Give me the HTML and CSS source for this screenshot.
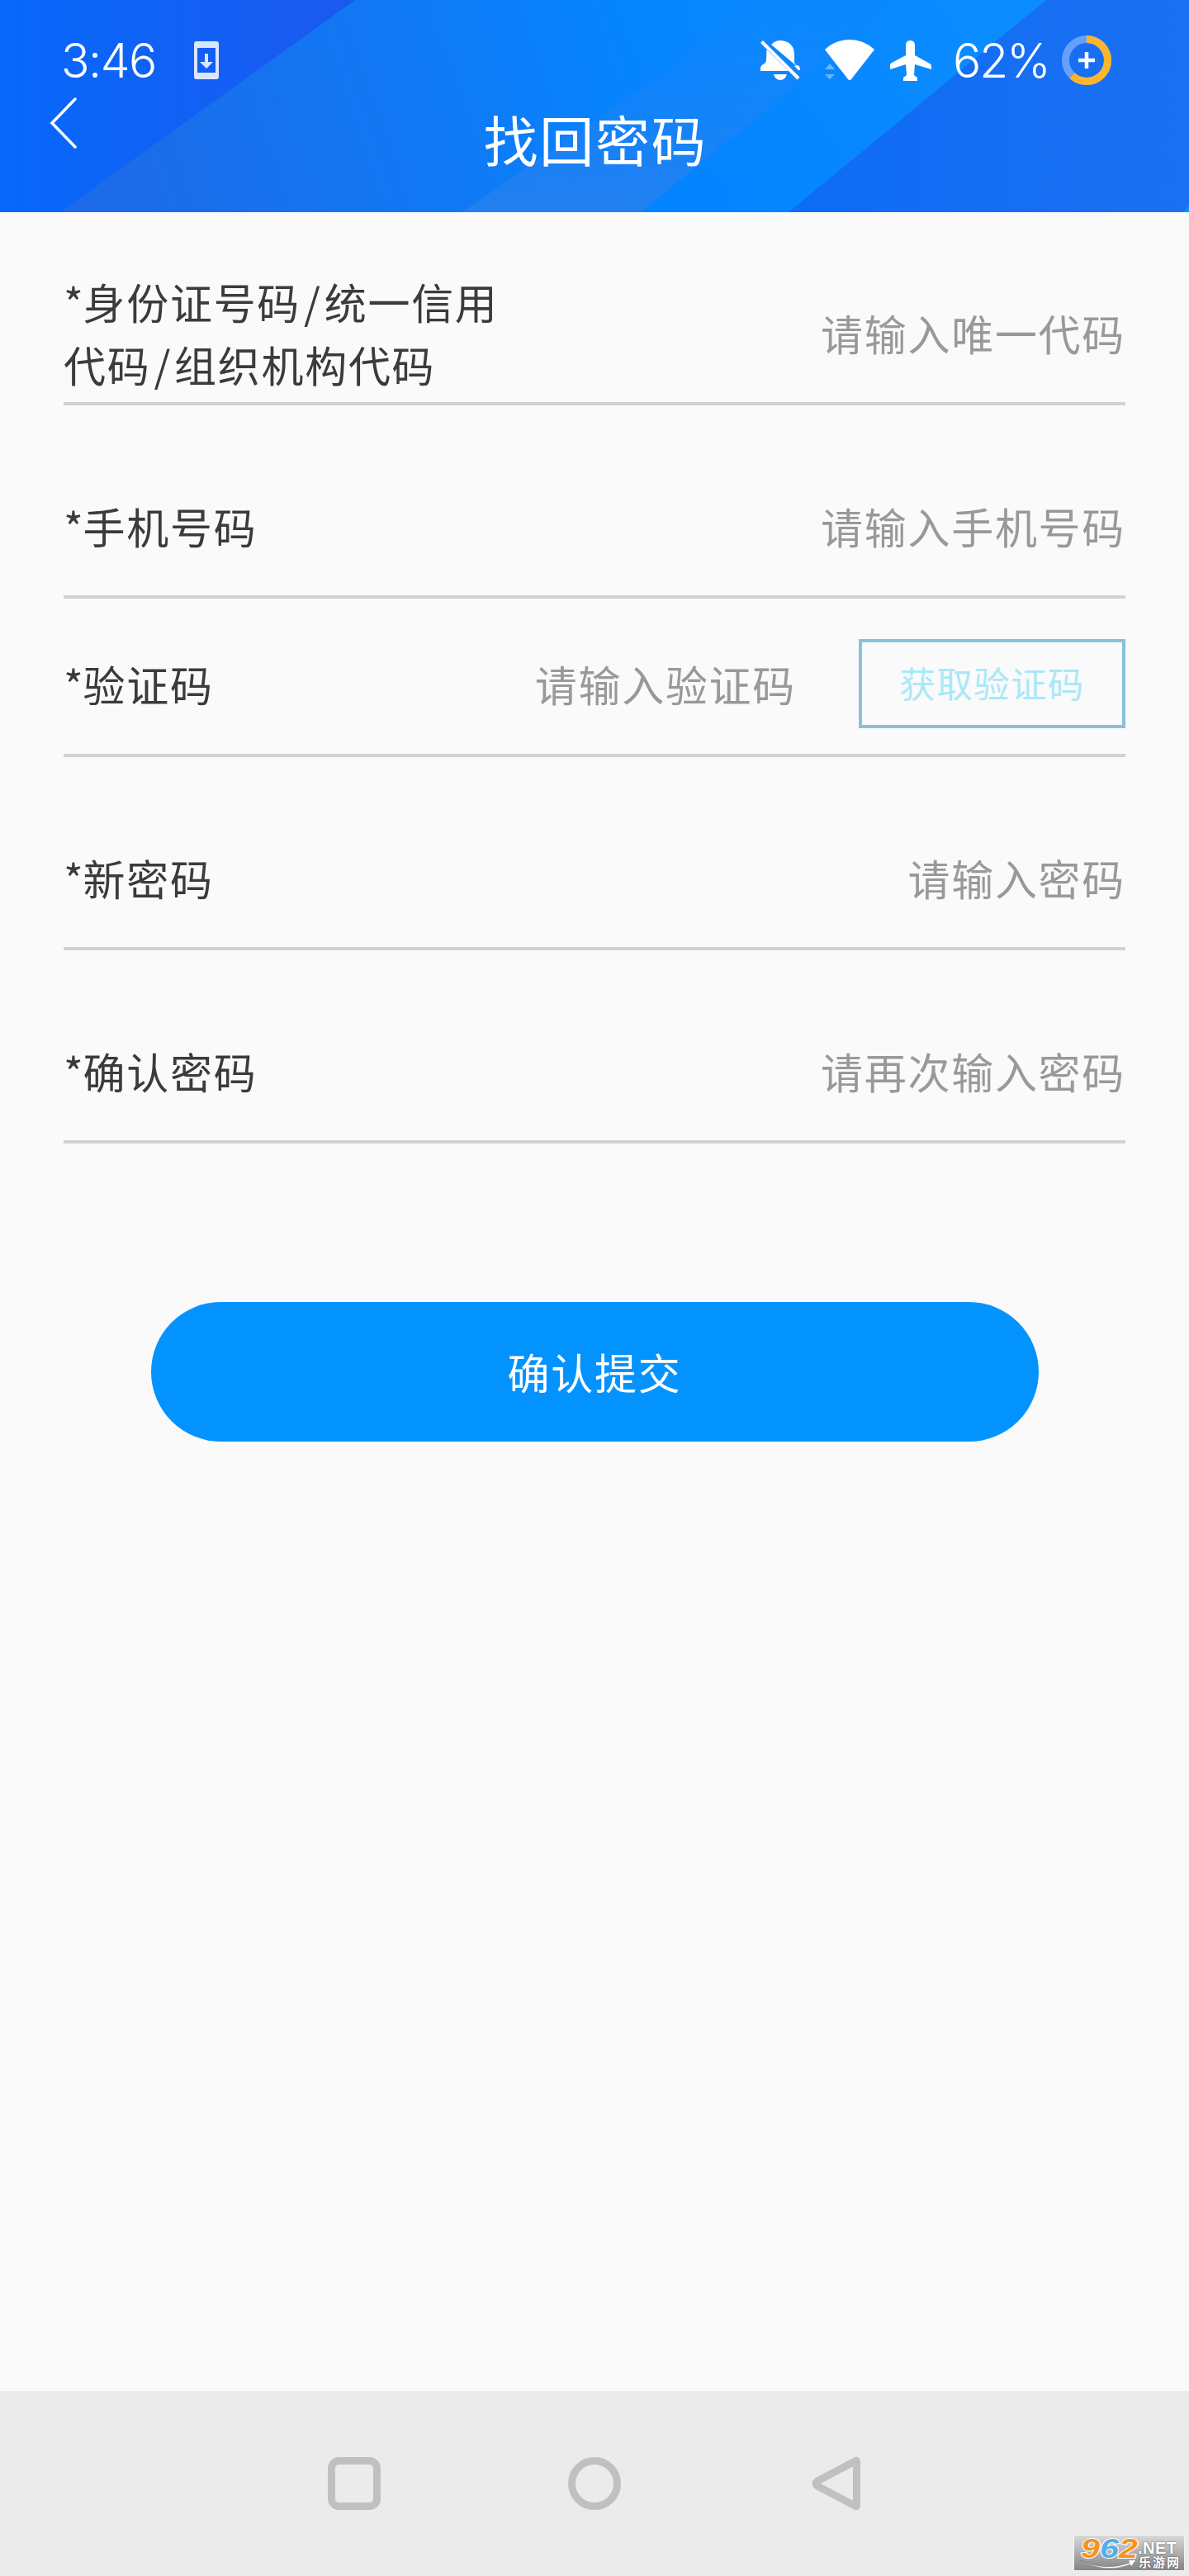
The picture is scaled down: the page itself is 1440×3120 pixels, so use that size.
FILE: index.html
```html
<!DOCTYPE html>
<html lang="zh-CN">
<head>
<meta charset="utf-8">
<title>找回密码</title>
<link rel="stylesheet" href="styles.css">
</head>
<body>
<div class="screen">
  <header class="header">
    <svg class="header-art" viewBox="0 0 1440 257" preserveAspectRatio="none" aria-hidden="true">
      <defs>
        <linearGradient id="deep" x1="0" x2="1" y1="0" y2="0"><stop offset="0" stop-color="#0768fb"/><stop offset="1" stop-color="#1b59ef"/></linearGradient>
        <linearGradient id="mid" gradientUnits="userSpaceOnUse" x1="150" y1="257" x2="900" y2="0"><stop offset="0" stop-color="#1d6be8"/><stop offset=".5" stop-color="#1079f5"/><stop offset=".8" stop-color="#0684ff"/><stop offset="1" stop-color="#0a88ff"/></linearGradient>
        <linearGradient id="band" x1="0" x2="0" y1="0" y2="1"><stop offset="0" stop-color="#1884fa" stop-opacity="0"/><stop offset="1" stop-color="#2380f0"/></linearGradient>
        <linearGradient id="bright" gradientUnits="userSpaceOnUse" x1="800" y1="257" x2="1200" y2="0"><stop offset="0" stop-color="#0383ff"/><stop offset="1" stop-color="#0b8cff"/></linearGradient>
        <linearGradient id="right" gradientUnits="userSpaceOnUse" x1="1000" y1="0" x2="1440" y2="0"><stop offset="0" stop-color="#0f6cf6"/><stop offset="1" stop-color="#1b70f1"/></linearGradient>
      </defs>
      <path fill="url(#mid)" d="M0 0h1440v257H0z"/>
      <path fill="url(#deep)" d="M0 0h430L73 257H0z"/>
      <path fill="url(#bright)" d="M1090 0h177L955 257H776z"/>
      <path fill="url(#band)" d="M930 0h160L776 257H560z"/>
      <path fill="url(#right)" d="M1267 0h173v257H955z"/>
      <path fill="#0b8cff" d="M1440 248v9h-7z"/>
    </svg>
    <div class="status">
      <div class="status-left">
        <span class="clock">3:46</span>
        <svg class="phone" viewBox="0 0 30 46"><path fill="#d9e6ff" fill-rule="evenodd" d="M3 0h24q3 0 3 3v40q0 3-3 3H3q-3 0-3-3V3q0-3 3-3zM4 8v30h22V8zM13 15h4v10h6l-8 8-8-8h6z"/></svg>
      </div>
      <div class="status-right">
        <svg class="bell" viewBox="0 0 48 48"><path fill="#fff" d="M13 5Q18 0 24 0q17 1 17 18v9l4 5zM7.500 11 34 37H0v-4q0-2 3-4 4-2 4-5zM45 30q3 1 3 6h-2l-5-5zM16 41h16q-2 7-8 7t-8-7z"/><path stroke="#fff" stroke-width="4" d="M1.500 1.500 46 46"/></svg>
        <svg class="wifi" viewBox="0 0 60 50"><path fill="#fff" d="M0 12Q13 0 30 0t30 12L32 48q-2 2-4 0z"/><path fill="#69b8ff" d="m6 29 6 7H0zM0 42h12l-6 6z"/></svg>
        <svg class="plane" viewBox="0 0 50 49"><path fill="#fff" d="M19 6q0-6 5.500-6T30 6v12l18 10q2 1 2 3v4l-20-6-1 13 4 3v4H16v-4l4-3-1-13-19 6v-5q0-2 2-3l17-9z"/></svg>
        <span class="percent">62%</span>
        <svg class="battery" viewBox="0 0 60 60"><circle cx="30" cy="30" r="25.500" fill="none" stroke="#65a0fb" stroke-width="9"/><circle cx="30" cy="30" r="25.500" fill="none" stroke="#fdb62b" stroke-width="9" pathLength="100" stroke-dasharray="62 38" transform="rotate(-90 30 30)"/><path stroke="#fff" stroke-width="4.500" d="M20 30h20M30 20v20"/></svg>
      </div>
    </div>
    <div class="titlebar">
      <svg class="back" viewBox="0 0 34 62"><path fill="none" stroke="#fff" stroke-width="3.500" stroke-linecap="round" d="M31 2 3 31l28 29"/></svg>
      <h1 class="title">找回密码</h1>
      <span class="spacer"></span>
    </div>
  </header>

  <main class="form">
    <div class="row row-id"><label class="label"><span class="star">*</span>身份证号码<span class="slash">/</span>统一信用<br>代码<span class="slash">/</span>组织机构代码</label><span class="hint">请输入唯一代码</span></div>
    <div class="row"><label class="label"><span class="star">*</span>手机号码</label><span class="hint">请输入手机号码</span></div>
    <div class="row row-code"><label class="label"><span class="star">*</span>验证码</label><span class="hint">请输入验证码</span><button class="get-code">获取验证码</button></div>
    <div class="row"><label class="label"><span class="star">*</span>新密码</label><span class="hint">请输入密码</span></div>
    <div class="row"><label class="label"><span class="star">*</span>确认密码</label><span class="hint">请再次输入密码</span></div>
    <button class="submit">确认提交</button>
  </main>

  <nav class="navbar">
    <svg class="nav-icon" viewBox="0 0 64 64"><rect x="4.500" y="4.500" width="55" height="55" rx="9"/></svg>
    <svg class="nav-icon" viewBox="0 0 64 64"><circle cx="32" cy="32" r="27.500"/></svg>
    <svg class="nav-icon" viewBox="0 0 64 64"><path transform="translate(4 0)" d="M54.500 5.500v53q0 2-2 .5L7 35q-4-3 0-6L52.500 5q2-1.500 2 .5z"/></svg>
  </nav>

  <div class="badge">
    <span class="badge-num"><i class="o">9</i><i class="b">6</i><i class="o">2</i></span>
    <svg class="badge-swoosh" viewBox="0 0 70 14"><path fill="#fff" stroke="#777" stroke-width=".6" d="M0 1q30 14 60 3l-2-3 10-1-6 9-1-3Q30 18 0 1z"/></svg>
    <span class="badge-net">.NET</span>
    <span class="badge-cn">乐游网</span>
  </div>
</div>
</body>
</html>
```
FILE: styles.css
```css
* { box-sizing: border-box; }
body {
  margin: 0;
  background: #fafafa;
  font-family: "Noto Sans CJK SC", sans-serif;
}
.screen {
  position: relative;
  display: flex;
  flex-direction: column;
  width: 1440px;
  height: 3120px;
  overflow: hidden;
}
svg { display: block; flex: none; }
button { font-family: inherit; padding: 0; margin: 0; }

.header {
  position: relative;
  height: 257px;
  color: #fff;
}
.header-art {
  position: absolute;
  inset: 0;
  width: 100%;
  height: 100%;
}
.status {
  position: relative;
  display: flex;
  justify-content: space-between;
  height: 116px;
  padding: 30px 94px 0 74px;
  font-family: Inter, Roboto, sans-serif;
  font-weight: 300;
  font-size: 57px;
  line-height: 86px;
  letter-spacing: -1.500px;
  white-space: nowrap;
}
.status-left, .status-right {
  display: flex;
  align-items: center;
  height: 86px;
}
.clock { width: 161px; padding-top: 2px; }
.percent { width: 134px; padding: 2px 0 0 2px; letter-spacing: -2px; }
.phone { width: 30px; height: 46px; }
.bell { width: 48px; height: 48px; margin-right: 30px; }
.wifi { width: 60px; height: 50px; margin-right: 19px; }
.plane { width: 50px; height: 49px; margin-right: 24px; }
.battery { width: 60px; height: 60px; }

.titlebar {
  position: relative;
  display: flex;
  justify-content: space-between;
  height: 141px;
  padding: 0 58px 0 60px;
}
.back { width: 34px; height: 62px; margin-top: 2px; }
.spacer { width: 34px; }
.title {
  margin: 0;
  font-size: 66px;
  font-weight: 400;
  line-height: 103px;
  letter-spacing: 1.700px;
}

.form {
  flex: 1;
  display: flex;
  flex-direction: column;
  padding: 0 77px;
}
.row {
  display: flex;
  justify-content: space-between;
  align-items: center;
  height: 234px;
  padding-top: 62px;
  border-bottom: 4px solid #d2d2d2;
}
.row-code { height: 192px; padding-top: 18px; }
.label, .hint {
  font-size: 51px;
  line-height: 76px;
  letter-spacing: 1.700px;
  white-space: nowrap;
}
.label { color: #3b3b3b; }
.star { margin-right: -2px; }
.slash { margin: 0 3px 0 4px; }
.hint { color: #999; }
.row-code .hint { margin-left: auto; margin-right: 76px; }
.get-code {
  width: 323px;
  height: 108px;
  border: 4px solid #88c2da;
  background: transparent;
  color: #aae8f8;
  font-size: 43.500px;
  line-height: 96px;
  letter-spacing: 1.400px;
  padding-bottom: 2px;
}
.submit {
  align-self: center;
  width: 1075px;
  height: 169px;
  margin-top: 192px;
  padding-bottom: 1px;
  border: 0;
  border-radius: 85px;
  background: #0393ff;
  color: #fff;
  font-size: 51px;
  letter-spacing: 1.700px;
}

.navbar {
  display: flex;
  justify-content: center;
  gap: 227px;
  height: 224px;
  padding-top: 80px;
  background: #ebebeb;
}
.nav-icon {
  width: 64px;
  height: 64px;
  overflow: visible;
  fill: none;
  stroke: #c0c0c0;
  stroke-width: 9;
  stroke-linejoin: round;
}

.badge {
  position: absolute;
  left: 1300px;
  top: 3070px;
  width: 135px;
  height: 44px;
  border: 1px solid #f4f4f4;
  background: linear-gradient(#d8d8d8, #858585);
  font-family: "Liberation Sans", "Noto Sans CJK SC", sans-serif;
  font-weight: 700;
  color: #fff;
}
.badge span, .badge-swoosh { position: absolute; }
.badge i { paint-order: stroke; -webkit-text-stroke: 2px #fff; }
.badge-num { left: 8px; top: 0; font-size: 33px; line-height: 32px; transform: scaleX(1.250); transform-origin: left; }
.o { color: #f7931e; }
.b { color: #55aee8; }
.badge-swoosh { left: 7px; top: 29px; width: 70px; height: 14px; }
.badge-net { left: 77px; top: 5px; font-size: 20px; line-height: 20px; letter-spacing: .500px; text-shadow: 0 0 2px #444; }
.badge-cn { left: 78px; top: 25px; font-size: 15px; line-height: 16px; letter-spacing: 2px; text-shadow: 0 0 2px #444; }
```
